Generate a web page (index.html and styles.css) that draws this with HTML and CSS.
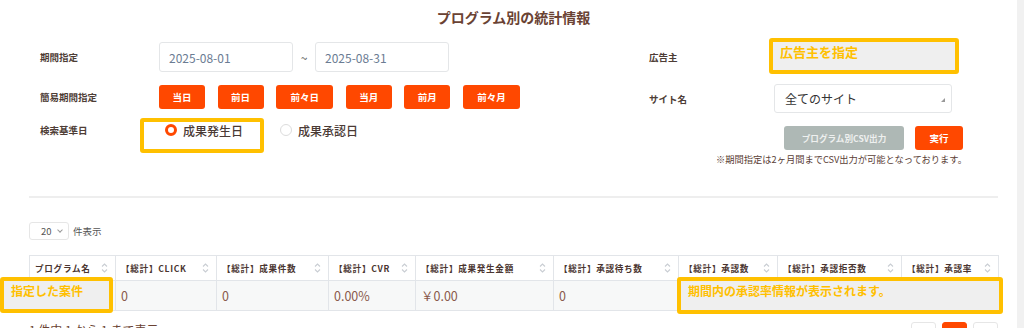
FILE: index.html
```html
<!DOCTYPE html>
<html lang="ja">

<head>
    <meta charset="utf-8">
    <link rel="stylesheet" href="styles.css">
</head>

<body>
    <div class="page">
        <h1 class="title">プログラム別の統計情報</h1>

        <div class="filters">
            <div class="filters-left">
                <div class="row row-dates">
                    <span class="label">期間指定</span>
                    <div class="control">
                        <input class="date" type="text" value="2025-08-01">
                        <span class="tilde">~</span>
                        <input class="date" type="text" value="2025-08-31">
                    </div>
                </div>
                <div class="row row-quick">
                    <span class="label">簡易期間指定</span>
                    <div class="control quick">
                        <button class="btn btn-orange">当日</button>
                        <button class="btn btn-orange">前日</button>
                        <button class="btn btn-orange wide">前々日</button>
                        <button class="btn btn-orange">当月</button>
                        <button class="btn btn-orange">前月</button>
                        <button class="btn btn-orange wide">前々月</button>
                    </div>
                </div>
                <div class="row row-base">
                    <span class="label">検索基準日</span>
                    <div class="control radios">
                        <label class="radio checked"><span class="dot"></span>成果発生日</label>
                        <label class="radio"><span class="dot"></span>成果承認日</label>
                        <div class="note-box note-radio"></div>
                    </div>
                </div>
            </div>

            <div class="filters-right">
                <div class="row row-field">
                    <span class="label">広告主</span>
                    <div class="field">
                        <div class="note-box note-advertiser">広告主を指定</div>
                    </div>
                </div>
                <div class="row row-field row-site">
                    <span class="label">サイト名</span>
                    <div class="field select">
                        全てのサイト
                        <span class="select-arrow"></span>
                    </div>
                </div>
                <div class="actions">
                    <button class="btn btn-grey">プログラム別CSV出力</button>
                    <button class="btn btn-orange run">実行</button>
                </div>
                <p class="notice">※期間指定は2ヶ月間までCSV出力が可能となっております。</p>
            </div>
        </div>

        <hr class="divider">

        <div class="length">
            <div class="length-select">20 <span class="chev"></span></div>
            <span class="length-text">件表示</span>
        </div>

        <div class="table-wrap">
            <table class="stats">
                <colgroup>
                    <col style="width: 86px">
                    <col style="width: 101px">
                    <col style="width: 112px">
                    <col style="width: 87px">
                    <col style="width: 138px">
                    <col style="width: 125px">
                    <col style="width: 99px">
                    <col style="width: 124px">
                    <col style="width: 97px">
                </colgroup>
                <thead>
                    <tr>
                        <th><div class="th-inner">プログラム名<svg class="sort" viewBox="0 0 7 12"><path d="M1 4.5L3.5 2L6 4.5M1 7.5L3.5 10L6 7.5"/></svg></div></th>
                        <th><div class="th-inner">【総計】CLICK<svg class="sort" viewBox="0 0 7 12"><path d="M1 4.5L3.5 2L6 4.5M1 7.5L3.5 10L6 7.5"/></svg></div></th>
                        <th><div class="th-inner">【総計】成果件数<svg class="sort" viewBox="0 0 7 12"><path d="M1 4.5L3.5 2L6 4.5M1 7.5L3.5 10L6 7.5"/></svg></div></th>
                        <th><div class="th-inner">【総計】CVR<svg class="sort" viewBox="0 0 7 12"><path d="M1 4.5L3.5 2L6 4.5M1 7.5L3.5 10L6 7.5"/></svg></div></th>
                        <th><div class="th-inner">【総計】成果発生金額<svg class="sort" viewBox="0 0 7 12"><path d="M1 4.5L3.5 2L6 4.5M1 7.5L3.5 10L6 7.5"/></svg></div></th>
                        <th><div class="th-inner">【総計】承認待ち数<svg class="sort" viewBox="0 0 7 12"><path d="M1 4.5L3.5 2L6 4.5M1 7.5L3.5 10L6 7.5"/></svg></div></th>
                        <th><div class="th-inner">【総計】承認数<svg class="sort" viewBox="0 0 7 12"><path d="M1 4.5L3.5 2L6 4.5M1 7.5L3.5 10L6 7.5"/></svg></div></th>
                        <th><div class="th-inner">【総計】承認拒否数<svg class="sort" viewBox="0 0 7 12"><path d="M1 4.5L3.5 2L6 4.5M1 7.5L3.5 10L6 7.5"/></svg></div></th>
                        <th><div class="th-inner">【総計】承認率<svg class="sort" viewBox="0 0 7 12"><path d="M1 4.5L3.5 2L6 4.5M1 7.5L3.5 10L6 7.5"/></svg></div></th>
                    </tr>
                </thead>
                <tbody>
                    <tr>
                        <td></td>
                        <td>0</td>
                        <td>0</td>
                        <td>0.00%</td>
                        <td>￥0.00</td>
                        <td>0</td>
                        <td></td>
                        <td></td>
                        <td></td>
                    </tr>
                </tbody>
            </table>
            <div class="note-box note-program">指定した案件</div>
            <div class="note-box note-rate">期間内の承認率情報が表示されます。</div>
        </div>

        <div class="table-footer">
            <span class="info">1 件中 1 から 1 まで表示</span>
            <div class="pager">
                <span class="page-btn"></span>
                <span class="page-btn active"></span>
                <span class="page-btn"></span>
            </div>
        </div>
    </div>
</body>

</html>
```

FILE: styles.css
```css
/* общие стили страницы */

body {
    margin: 0;
    background-color: #f1f1f1;
    font-family: "Noto Sans CJK JP", "Noto Sans", sans-serif;
    color: #4e3d36;
}

.page {
    width: 1017px;
    height: 328px;
    overflow: hidden;
    box-sizing: border-box;
    padding: 0 19px 0 29px;
    background-color: #fff;
}

.title {
    margin: 7px 0 15px;
    font-size: 14px;
    line-height: 20px;
    font-weight: 700;
    text-align: center;
    color: #6a4233;
}

/* фильтры */

.filters {
    display: flex;
    align-items: flex-start;
    height: 124px;
}

.filters-left {
    width: 609px;
    margin-left: 11px;
}

.filters-right {
    flex: 1;
}

.row {
    display: flex;
    align-items: center;
}

.label {
    width: 119px;
    flex-shrink: 0;
    font-size: 9.5px;
    font-weight: 700;
    color: #4e3d36;
}

.control {
    display: flex;
    align-items: center;
    position: relative;
}

.row-dates {
    height: 30px;
}

.date {
    width: 134px;
    height: 30px;
    box-sizing: border-box;
    border: 1px solid #e4e6e8;
    border-radius: 3px;
    padding: 0 9px;
    font-family: inherit;
    font-size: 12px;
    color: #6b7c93;
    outline: none;
}

.tilde {
    width: 22px;
    text-align: center;
    font-size: 12px;
    color: #555;
}

.row-quick {
    margin-top: 13px;
    height: 24px;
}

.quick {
    gap: 12.6px;
}

.btn {
    height: 24px;
    border: none;
    border-radius: 3px;
    padding: 0;
    font-family: inherit;
    font-size: 9.5px;
    font-weight: 700;
    color: #fff;
}

.btn-orange {
    width: 46px;
    background-color: #ff4800;
}

.btn-orange.wide {
    width: 57px;
}

.row-base {
    margin-top: 11px;
    height: 20px;
}

.radios {
    padding-left: 6px;
}

.radio {
    display: flex;
    align-items: center;
    gap: 6px;
    font-size: 12px;
    font-weight: 500;
    color: #4a3a35;
    margin-right: 37px;
}

.dot {
    width: 12px;
    height: 12px;
    box-sizing: border-box;
    border-radius: 50%;
    border: 1px solid #dcdcdc;
    background-color: #fff;
}

.radio.checked .dot {
    border: 3.5px solid #ff4800;
}

/* правая колонка */

.filters-right .label {
    width: 125px;
}

.row-field {
    height: 29px;
}

.row-site {
    margin-top: 13px;
}

.field {
    width: 178px;
    height: 29px;
    box-sizing: border-box;
    border: 1px solid #e4e6e8;
    border-radius: 3px;
    position: relative;
}

.select {
    display: flex;
    align-items: center;
    padding-left: 10px;
    font-size: 12px;
    color: #333;
}

.select-arrow {
    position: absolute;
    right: 6px;
    top: 13px;
    border-left: 4px solid transparent;
    border-bottom: 4px solid #999;
}

.actions {
    display: flex;
    gap: 11px;
    margin: 13px 0 0 135px;
}

.btn-grey {
    width: 120px;
    background-color: #aeb8b5;
    color: #eef0ef;
    font-size: 8.6px;
}

.run {
    width: 48px;
}

.notice {
    margin: 3px 0 0 67px;
    font-size: 9.25px;
    line-height: 13px;
    color: #5a4036;
    white-space: nowrap;
}

/* пометки */

.note-box {
    position: absolute;
    box-sizing: border-box;
    border: 4px solid #ffc000;
    border-radius: 3px;
    background-color: #efefef;
    color: #ffc000;
    font-weight: 700;
    font-size: 12px;
    line-height: 16px;
    padding: 2px 7px;
}

.note-radio {
    left: -19px;
    top: -4px;
    width: 124px;
    height: 35px;
    background: none;
}

.note-advertiser {
    left: -6px;
    top: -5px;
    width: 190px;
    height: 36px;
    font-size: 13px;
}

.note-program {
    left: -29px;
    top: 22px;
    width: 113px;
    height: 36px;
}

.note-rate {
    left: 648px;
    top: 22px;
    width: 326px;
    height: 37px;
}

/* таблица */

.divider {
    margin: 30px 0 0;
    border: none;
    border-top: 2px solid #eeeeee;
}

.length {
    display: flex;
    align-items: center;
    margin-top: 24px;
    height: 18px;
}

.length-select {
    width: 40px;
    height: 18px;
    box-sizing: border-box;
    border: 1px solid #e6e6e6;
    border-radius: 3px;
    padding-left: 11px;
    font-size: 9.5px;
    line-height: 16px;
    color: #555;
    position: relative;
}

.chev {
    position: absolute;
    left: 28px;
    top: 5px;
    width: 3px;
    height: 3px;
    border-right: 1px solid #999;
    border-bottom: 1px solid #999;
    transform: rotate(45deg);
}

.length-text {
    margin-left: 4px;
    font-size: 9.5px;
    color: #555;
}

.table-wrap {
    position: relative;
    margin-top: 15px;
}

.stats {
    width: 969px;
    border-collapse: collapse;
    table-layout: fixed;
}

.stats th,
.stats td {
    border: 1px solid #e2e5e9;
    padding: 0 5px;
    text-align: left;
    white-space: nowrap;
}

.stats th {
    height: 24px;
    font-size: 8.6px;
    font-weight: 700;
    letter-spacing: 0.7px;
    color: #4a3530;
}

.th-inner {
    display: flex;
    align-items: center;
    justify-content: space-between;
}

.sort {
    width: 7px;
    height: 12px;
    margin-right: 2px;
    fill: none;
    stroke: #c9cdd3;
    stroke-width: 1.1;
}

.stats td {
    height: 29px;
    background-color: #f7f8f8;
    font-size: 12.5px;
    color: #8a5a4b;
}

.table-footer {
    display: flex;
    justify-content: space-between;
    align-items: flex-start;
    margin-top: 11px;
}

.info {
    font-size: 12px;
    line-height: 16px;
    color: #6a4233;
}

.pager {
    display: flex;
    gap: 6px;
}

.page-btn {
    width: 25px;
    height: 24px;
    box-sizing: border-box;
    border: 1px solid #e6e6e6;
    border-radius: 3px;
}

.page-btn.active {
    background-color: #ff4800;
    border-color: #ff4800;
}
```
